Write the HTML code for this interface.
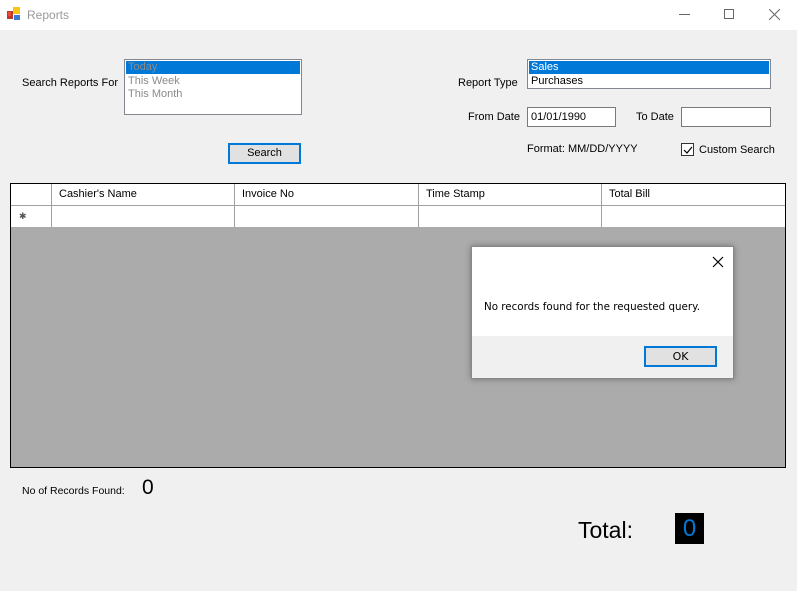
<!DOCTYPE html>
<html><head><style>
*{margin:0;padding:0;box-sizing:border-box}
body{width:797px;height:591px;background:#f0f0f0;font-family:"Liberation Sans",sans-serif;font-size:11px;color:#000;position:relative;overflow:hidden}
.a{position:absolute;white-space:nowrap}
.box{position:absolute;background:#fff;border:1px solid #7a7a7a}
.sel{background:#0078d7;color:#fff}
.hc{position:absolute;top:0;height:21px;border-right:1px solid #a0a0a0;padding:4px 0 0 7px;background:#fff}
</style></head><body>
<div class="a" style="left:0;top:0;width:797px;height:30px;background:#fff"></div>
<svg class="a" style="left:7px;top:7px" width="14" height="14"><rect x="0" y="4" width="6" height="8" fill="#c0392b"/><rect x="1" y="5" width="3" height="4" fill="#e74c3c"/><rect x="6" y="0" width="7" height="7" fill="#f5c518"/><rect x="7" y="8" width="6" height="5" fill="#3a7bd5"/></svg>
<div class="a" style="left:27px;top:8px;color:#999;font-size:12px">Reports</div>
<div class="a" style="left:679px;top:14px;width:11px;height:1px;background:#666"></div>
<div class="a" style="left:724px;top:9px;width:10px;height:10px;border:1px solid #666"></div>
<svg class="a" style="left:769px;top:9px" width="11" height="11"><path d="M0 0L11 11M11 0L0 11" stroke="#666" stroke-width="1"/></svg>

<div class="a" style="left:22px;top:77px">Search Reports For</div>
<div class="box" style="left:124px;top:59px;width:178px;height:56px;border-color:#828790">
<div class="sel" style="margin:1px;height:13px;line-height:13px;padding-left:2px;color:#8a8a8a">Today</div>
<div style="color:#8a8a8a;padding-left:3px;line-height:13px">This Week</div>
<div style="color:#8a8a8a;padding-left:3px;line-height:13px">This Month</div>
</div>
<div class="a" style="left:228px;top:143px;width:73px;height:21px;border:2px solid #0078d7;background:#e1e1e1;text-align:center;line-height:17px">Search</div>

<div class="a" style="left:458px;top:77px">Report Type</div>
<div class="box" style="left:527px;top:59px;width:244px;height:30px;border-color:#828790">
<div class="sel" style="margin:1px;height:13px;line-height:13px;padding-left:2px">Sales</div>
<div style="padding-left:3px;line-height:13px">Purchases</div>
</div>
<div class="a" style="left:468px;top:111px">From Date</div>
<div class="box" style="left:527px;top:107px;width:89px;height:20px;padding:3px 0 0 3px">01/01/1990</div>
<div class="a" style="left:636px;top:111px">To Date</div>
<div class="box" style="left:681px;top:107px;width:90px;height:20px"></div>
<div class="a" style="left:527px;top:143px">Format: MM/DD/YYYY</div>
<div class="a" style="left:681px;top:143px;width:13px;height:13px;border:1px solid #333;background:#fff"></div>
<svg class="a" style="left:683px;top:145px" width="10" height="10"><path d="M1 5L4 8L9 2" stroke="#000" fill="none" stroke-width="1.2"/></svg>
<div class="a" style="left:699px;top:144px">Custom Search</div>

<div class="a" style="left:10px;top:183px;width:776px;height:285px;border:1px solid #000;background:#ababab">
<div class="a" style="left:0;top:0;width:774px;height:43px;background:#fff"></div>
<div class="hc" style="left:0;width:41px"></div>
<div class="hc" style="left:41px;width:183px">Cashier's Name</div>
<div class="hc" style="left:224px;width:184px">Invoice No</div>
<div class="hc" style="left:408px;width:183px">Time Stamp</div>
<div class="hc" style="left:591px;width:183px;border-right:none">Total Bill</div>
<div class="a" style="left:0;top:21px;width:774px;height:1px;background:#a0a0a0"></div>
<div class="a" style="left:0;top:22px;width:41px;height:21px;border-right:1px solid #a0a0a0;font-size:9px;padding:5px 0 0 8px;color:#555">✱</div>
<div class="a" style="left:223px;top:22px;width:1px;height:21px;background:#a0a0a0"></div>
<div class="a" style="left:407px;top:22px;width:1px;height:21px;background:#a0a0a0"></div>
<div class="a" style="left:590px;top:22px;width:1px;height:21px;background:#a0a0a0"></div>
</div>

<div class="a" style="left:471px;top:246px;width:263px;height:133px;background:#fff;border:1px solid #888;box-shadow:0 0 6px rgba(0,0,0,.35)">
<svg class="a" style="left:240px;top:9px" width="12" height="12"><path d="M1 1L11 11M11 1L1 11" stroke="#000" stroke-width="1.2"/></svg>
<div class="a" style="left:12px;top:54px;font-family:'DejaVu Sans',sans-serif;font-size:10.3px">No records found for the requested query.</div>
<div class="a" style="left:0;top:89px;width:261px;height:42px;background:#f0f0f0"></div>
<div class="a" style="left:172px;top:99px;width:73px;height:21px;border:2px solid #0078d7;background:#e1e1e1;text-align:center;line-height:17px;font-family:'DejaVu Sans',sans-serif;font-size:11px">OK</div>
</div>

<div class="a" style="left:22px;top:485px;font-size:10.5px">No of Records Found:</div>
<div class="a" style="left:142px;top:476px;font-size:21px">0</div>
<div class="a" style="left:578px;top:517px;font-size:23px">Total:</div>
<div class="a" style="left:675px;top:513px;width:29px;height:31px;background:#000;color:#0078d7;font-size:24px;text-align:center;line-height:31px">0</div>
</body></html>
